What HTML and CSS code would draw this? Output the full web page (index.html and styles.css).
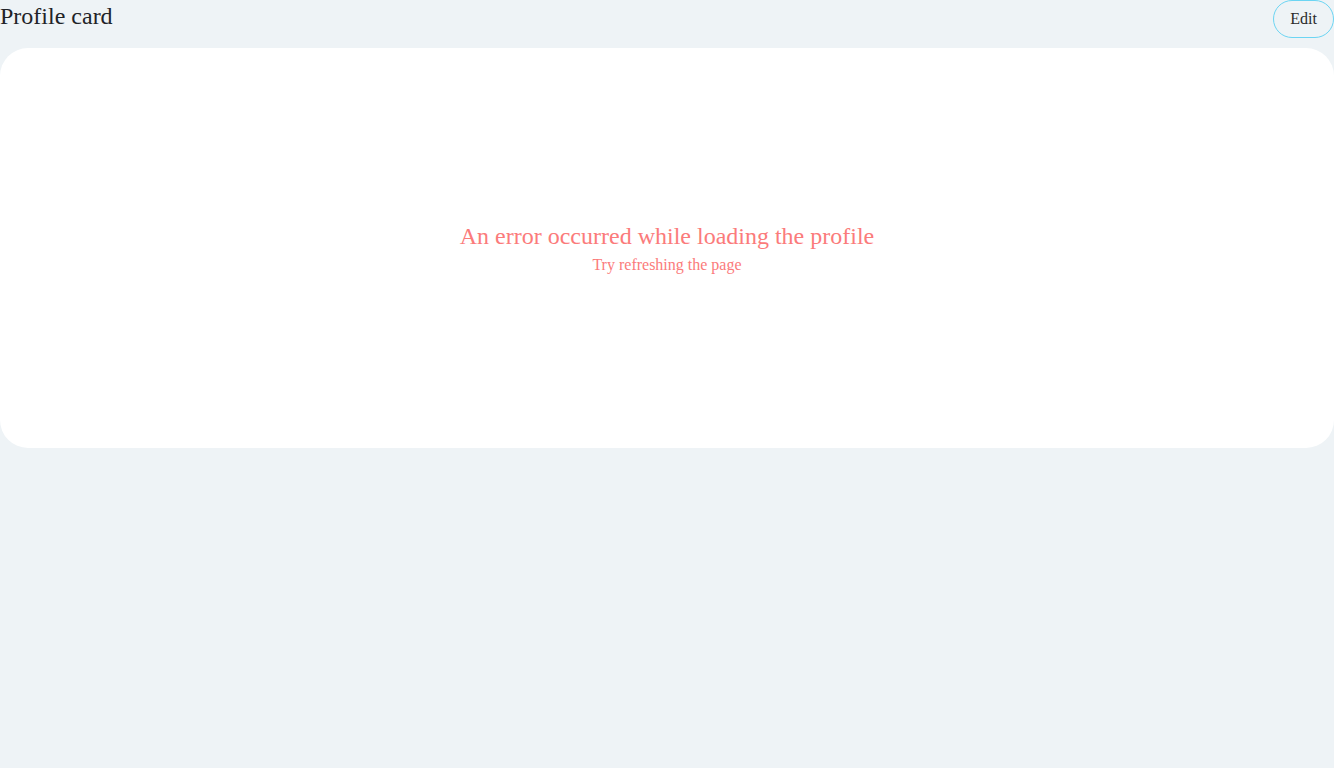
FILE: index.html
```html
<!DOCTYPE html>
<html lang="en">
<head>
<meta charset="utf-8">
<title>Profile card</title>
<link rel="stylesheet" href="styles.css">
</head>
<body>
<div class="page">
  <header class="header">
    <h1 class="title">Profile card</h1>
    <button class="edit-btn" type="button">Edit</button>
  </header>
  <section class="card">
    <div class="error">
      <p class="error-title">An error occurred while loading the profile</p>
      <p class="error-hint">Try refreshing the page</p>
    </div>
  </section>
</div>
</body>
</html>
```

FILE: styles.css
```css
html, body {
  margin: 0;
  padding: 0;
  background: #eef3f6;
  font-family: "Liberation Serif", "Times New Roman", serif;
  color: #1f2328;
}
.page {
  display: flex;
  flex-direction: column;
  gap: 10px;
}
.header {
  display: flex;
  justify-content: space-between;
  align-items: flex-start;
  height: 38px;
}
.title {
  margin: 0;
  font-size: 24px;
  font-weight: normal;
  line-height: 32px;
}
.edit-btn {
  height: 38px;
  padding: 0 16px;
  border: 1px solid #6cd5f3;
  border-radius: 19px;
  background: transparent;
  font-family: "Liberation Serif", "Times New Roman", serif;
  font-size: 16px;
  color: #2a2a2a;
}
.card {
  height: 400px;
  background: #ffffff;
  border-radius: 28px;
  display: flex;
  align-items: center;
  justify-content: center;
}
.error {
  text-align: center;
  color: #fb7b7b;
  display: flex;
  flex-direction: column;
  gap: 6px;
}
.error-title {
  margin: 0;
  font-size: 24px;
}
.error-hint {
  margin: 0;
  font-size: 16px;
}
```
